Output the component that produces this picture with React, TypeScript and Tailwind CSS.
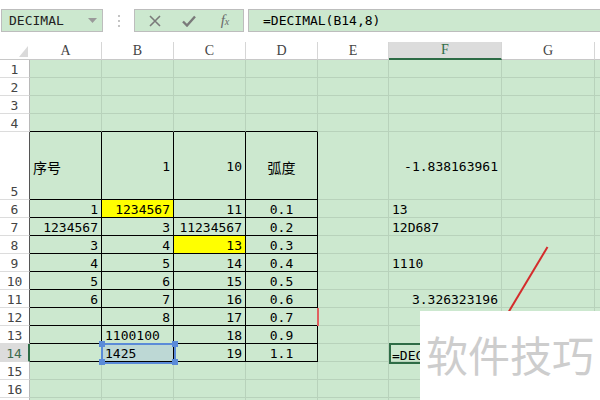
import React from 'react';

type Cell = { t: string; a?: 'l' | 'r' | 'c'; y?: boolean; cjk?: boolean };

const data: Record<string, Cell> = {
  A5: { t: '序号', a: 'l', cjk: true },
  B5: { t: '1', a: 'r' },
  C5: { t: '10', a: 'r' },
  D5: { t: '弧度', a: 'c', cjk: true },
  F5: { t: '-1.838163961', a: 'r' },
  A6: { t: '1', a: 'r' },
  B6: { t: '1234567', a: 'r', y: true },
  C6: { t: '11', a: 'r' },
  D6: { t: '0.1', a: 'c' },
  F6: { t: '13', a: 'l' },
  A7: { t: '1234567', a: 'r' },
  B7: { t: '3', a: 'r' },
  C7: { t: '11234567', a: 'r' },
  D7: { t: '0.2', a: 'c' },
  F7: { t: '12D687', a: 'l' },
  A8: { t: '3', a: 'r' },
  B8: { t: '4', a: 'r' },
  C8: { t: '13', a: 'r', y: true },
  D8: { t: '0.3', a: 'c' },
  A9: { t: '4', a: 'r' },
  B9: { t: '5', a: 'r' },
  C9: { t: '14', a: 'r' },
  D9: { t: '0.4', a: 'c' },
  F9: { t: '1110', a: 'l' },
  A10: { t: '5', a: 'r' },
  B10: { t: '6', a: 'r' },
  C10: { t: '15', a: 'r' },
  D10: { t: '0.5', a: 'c' },
  A11: { t: '6', a: 'r' },
  B11: { t: '7', a: 'r' },
  C11: { t: '16', a: 'r' },
  D11: { t: '0.6', a: 'c' },
  F11: { t: '3.326323196', a: 'r' },
  B12: { t: '8', a: 'r' },
  C12: { t: '17', a: 'r' },
  D12: { t: '0.7', a: 'c' },
  B13: { t: '1100100', a: 'l' },
  C13: { t: '18', a: 'r' },
  D13: { t: '0.9', a: 'c' },
  B14: { t: '1425', a: 'l' },
  C14: { t: '19', a: 'r' },
  D14: { t: '1.1', a: 'c' },
};

const COLS = ['A', 'B', 'C', 'D', 'E', 'F', 'G', 'H'];
const COLW = ['w-[72px]', 'w-[72px]', 'w-[72px]', 'w-[72px]', 'w-[71px]', 'w-[113px]', 'w-[93px]', 'w-[40px]'];
const ROWS = Array.from({ length: 17 }, (_, i) => i + 1);

const MONO = "font-['DejaVu_Sans_Mono','Liberation_Mono',monospace]";
const CJK = "font-['Noto_Sans_CJK_SC',sans-serif]";

function SheetCell({ col, ci, row }: { col: string; ci: number; row: number }) {
  const key = col + row;
  const c = data[key];
  const inTable = ci <= 3 && row >= 5 && row <= 14;
  const topOfTable = ci <= 3 && row === 4;
  const rightBlack = inTable;
  const bottomBlack = inTable || topOfTable;
  const bg = c?.y ? 'bg-[#ffff00]' : key === 'B14' ? 'bg-[#bdd8d5]' : 'bg-[#cce8cf]';
  const align =
    key === 'F14' || c?.a === 'l'
      ? 'justify-start pl-[3px]'
      : c?.a === 'c'
      ? 'justify-center'
      : 'justify-end pr-[3px]';
  return (
    <div
      className={[
        COLW[ci],
        'shrink-0 h-full flex items-center border-r border-b whitespace-nowrap text-black',
        rightBlack ? 'border-r-black' : 'border-r-[#b8d2bb]',
        bottomBlack ? 'border-b-black' : 'border-b-[#b8d2bb]',
        bg,
        align,
      ].join(' ')}
    >
      {c && (
        <span className={(c.cjk ? CJK + ' text-[14px]' : MONO + ' text-[13px]') + ' leading-none pt-[2px]'}>{c.t}</span>
      )}
      {key === 'F14' && (
        <span className="block w-[28px] overflow-hidden pt-[2px] leading-none">
          <span className={MONO + ' text-[13px] leading-none whitespace-nowrap'}>=DECIMAL(B14,8)</span>
        </span>
      )}
    </div>
  );
}

export default function App() {
  return (
    <div className="relative w-[600px] h-[400px] overflow-hidden bg-white">
      {/* Toolbar */}
      <div className="h-[42px] flex items-start pt-[9px] bg-white">
        <div className="ml-[1px] w-[102px] h-[23px] border border-[#bdbdbd] bg-[#cce8cf] flex items-center pl-[7px] pr-[5px]">
          <span className={MONO + ' text-[13px] text-[#222] flex-1'}>DECIMAL</span>
          <svg width="9" height="6" viewBox="0 0 9 6">
            <polygon points="0,0 9,0 4.5,5" fill="#9a9a9a" />
          </svg>
        </div>
        <div className="w-[31px] h-[23px] flex flex-col items-center justify-center gap-[3px]">
          <div className="w-[2px] h-[2px] bg-[#c4c4c4]" />
          <div className="w-[2px] h-[2px] bg-[#c4c4c4]" />
          <div className="w-[2px] h-[2px] bg-[#c4c4c4]" />
        </div>
        <div className="w-[110px] h-[23px] border border-[#bdbdbd] bg-[#cce8cf] flex items-center">
          <div className="w-[36px] flex justify-center pl-[3px]">
            <svg width="12" height="12" viewBox="0 0 12 12">
              <path d="M1 1 L11 11 M11 1 L1 11" stroke="#7a7a7a" strokeWidth="1.6" />
            </svg>
          </div>
          <div className="w-[36px] flex justify-center">
            <svg width="14" height="12" viewBox="0 0 14 12">
              <path d="M1 6.5 L5 10.5 L13 1.5" stroke="#7a7a7a" strokeWidth="2.4" fill="none" />
            </svg>
          </div>
          <div className="w-[36px] flex justify-center">
            <span className="font-['Liberation_Serif',serif] italic text-[15px] text-[#6a6a6a] leading-none">
              f<span className="text-[10px]">x</span>
            </span>
          </div>
        </div>
        <div className="ml-[4px] flex-1 h-[23px] border border-[#bdbdbd] border-r-0 bg-[#cce8cf] flex items-center pl-[14px]">
          <span className={MONO + ' text-[13px] text-black'}>=DECIMAL(B14,8)</span>
        </div>
      </div>

      {/* Column header */}
      <div className="flex h-[18px] bg-white">
        <div className="w-[30px] shrink-0 h-full border-b border-[#c8c8c8] flex items-end justify-end pr-[2px] pb-[2px]">
          <svg width="9" height="11" viewBox="0 0 9 11">
            <polygon points="9,0 9,11 0,11" fill="#dadada" />
          </svg>
        </div>
        {COLS.map((col, ci) => (
          <div
            key={col}
            className={[
              COLW[ci],
              'shrink-0 h-full flex items-end justify-center pb-[1px] border-r border-r-[#d6d6d6]',
              col === 'F'
                ? 'bg-[#dcdcdc] border-b-2 border-b-[#2e6c46] text-[#2e6c46]'
                : 'border-b border-b-[#c8c8c8] text-[#444]',
            ].join(' ')}
          >
            {col !== 'H' && <span className="font-['Liberation_Serif',serif] text-[14px] leading-none">{col}</span>}
          </div>
        ))}
      </div>

      {/* Rows */}
      {ROWS.map((row) => (
        <div key={row} className={'flex ' + (row === 5 ? 'h-[68px]' : 'h-[18px]')}>
          <div
            className={[
              'w-[30px] shrink-0 h-full flex items-end justify-center pb-[1px] border-b border-b-[#dcdcdc]',
              row === 14
                ? 'bg-[#dcdcdc] border-r-2 border-r-[#2e6c46] text-[#3d6b4f]'
                : row >= 5 && row <= 14
                ? 'bg-white border-r border-r-[#555] text-[#444]'
                : 'bg-white border-r border-r-[#b8b8b8] text-[#444]',
            ].join(' ')}
          >
            {row <= 16 && <span className={MONO + ' text-[13px] leading-none'}>{row}</span>}
          </div>
          {COLS.map((col, ci) => (
            <SheetCell key={col} col={col} ci={ci} row={row} />
          ))}
        </div>
      ))}

      {/* Overlays */}
      <div className="absolute left-[317px] top-[308px] w-[2px] h-[18px] bg-[#e06060]" />

      {/* B14 selection */}
      <div className="absolute left-[101px] top-[343px] w-[75px] h-[21px] border-2 border-[#5b8bd8]" />
      <div className="absolute left-[99px] top-[341px] w-[6px] h-[6px] bg-[#5b8bd8]" />
      <div className="absolute left-[172px] top-[341px] w-[6px] h-[6px] bg-[#5b8bd8]" />
      <div className="absolute left-[99px] top-[359px] w-[6px] h-[6px] bg-[#5b8bd8]" />
      <div className="absolute left-[172px] top-[359px] w-[6px] h-[6px] bg-[#5b8bd8]" />

      {/* F14 editing border */}
      <div className="absolute left-[389px] top-[343px] w-[114px] h-[21px] border-2 border-[#2e6c46]" />

      {/* Red line */}
      <svg className="absolute left-0 top-0" width="600" height="400" viewBox="0 0 600 400">
        <line x1="547.5" y1="247" x2="508" y2="313" stroke="#d42c2c" strokeWidth="2" />
      </svg>

      {/* Watermark */}
      <div className="absolute left-[420px] top-[311px] right-0 bottom-0 bg-white pl-[6px] pt-[22px]">
        <span className={CJK + ' text-[42px] leading-none text-[#cdcdcd] whitespace-nowrap'}>软件技巧</span>
      </div>
    </div>
  );
}
